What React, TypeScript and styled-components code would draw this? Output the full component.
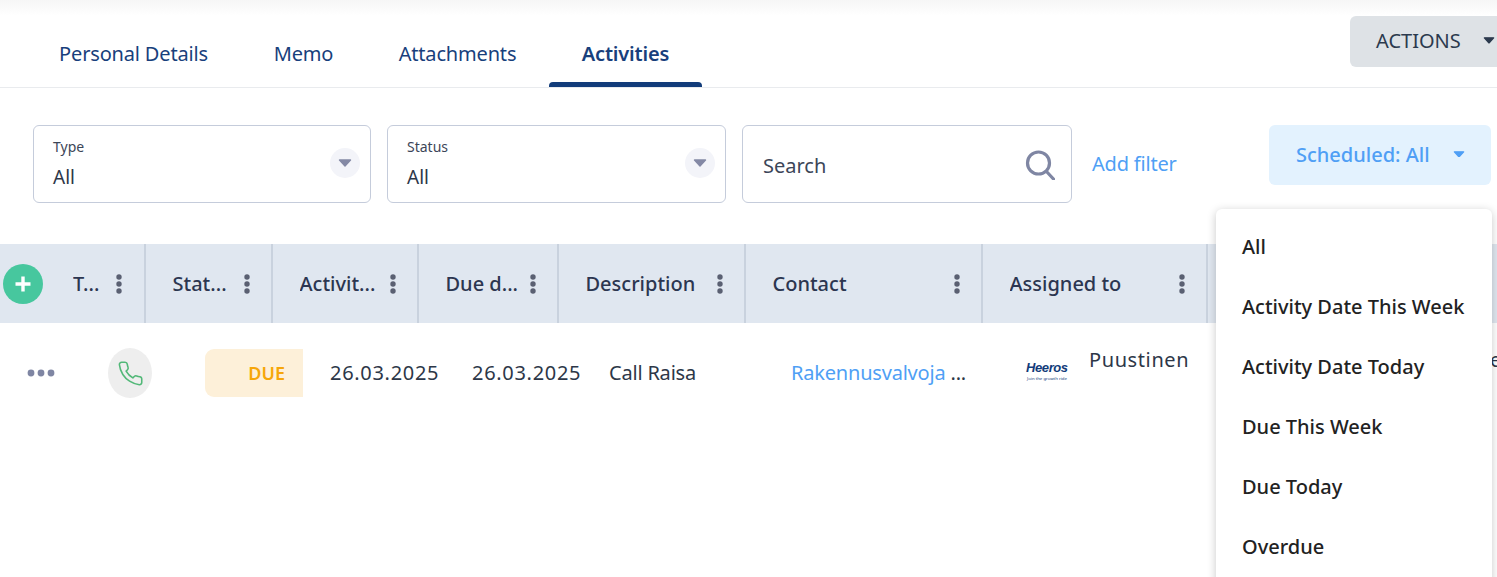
import React from "react";
import styled, { createGlobalStyle } from "styled-components";

const Global = createGlobalStyle`
  html, body { margin: 0; padding: 0; background: #fff; height: 100%; overflow: hidden; }
  body { font-family: "Noto Sans", "Open Sans", sans-serif; color: #2d3748; }
  * { box-sizing: border-box; }
`;

const Page = styled.div`
  position: relative;
  width: 1497px;
  height: 577px;
  overflow: hidden;
  background: #fff;
`;
const TopShade = styled.div`
  height: 16px;
  background: linear-gradient(#f6f6f6, #ffffff);
`;
const Header = styled.header`
  height: 72px;
  display: flex;
  justify-content: space-between;
  border-bottom: 1px solid #e9ebee;
  padding-left: 26px;
`;
const Tabs = styled.nav`
  display: flex;
  height: 71px;
`;
const Tab = styled.div<{ $active?: boolean; $w: number }>`
  position: relative;
  width: ${(p) => p.$w}px;
  display: flex;
  justify-content: center;
  padding-top: 24px;
  font-size: 20px;
  line-height: 27px;
  letter-spacing: -0.17px;
  color: #183f7c;
  font-weight: ${(p) => (p.$active ? 600 : 400)};
  ${(p) =>
    p.$active &&
    `&::after {
      content: "";
      position: absolute;
      left: 0;
      right: 0;
      bottom: 0;
      height: 5px;
      background: #123c7a;
      border-radius: 4px 4px 0 0;
    }`}
`;
const ActionsButton = styled.div`
  width: 147px;
  height: 51px;
  background: #dee2e6;
  border-radius: 6px 0 0 6px;
  display: flex;
  align-items: center;
  padding: 0 0 2px 26px;
  gap: 22px;
  font-size: 20px;
  color: #2c3a4e;
`;
const CaretIcon = ({ color, size = 12 }: { color: string; size?: number }) => (
  <svg width={size} height={(size * 8) / 14} viewBox="0 0 14 8">
    <path d="M1.5 1 H12.5 L7 7 Z" fill={color} stroke={color} strokeWidth="1.4" strokeLinejoin="round" />
  </svg>
);
const FilterRow = styled.section`
  display: flex;
  align-items: flex-start;
  padding: 37px 0 0 33px;
  height: 156px;
`;
const SelectBox = styled.div<{ $w: number }>`
  width: ${(p) => p.$w}px;
  height: 78px;
  margin-right: 16px;
  border: 1px solid #c5ccdb;
  border-radius: 6px;
  padding: 11px 19px;
  display: flex;
  align-items: flex-start;
  justify-content: space-between;
`;
const SelectText = styled.div`
  display: flex;
  flex-direction: column;
`;
const SelectLabel = styled.span`
  font-size: 14px;
  line-height: 19px;
  color: #3c4658;
`;
const SelectValue = styled.span`
  font-size: 19px;
  line-height: 26px;
  margin-top: 8px;
  color: #2d3748;
`;
const CaretCircle = styled.span`
  width: 30px;
  height: 30px;
  border-radius: 50%;
  background: #f3f4f9;
  display: flex;
  align-items: center;
  justify-content: center;
  margin: 11px -9px 0 0;
`;
const SearchBox = styled.div`
  width: 330px;
  height: 78px;
  border: 1px solid #c5ccdb;
  border-radius: 6px;
  padding: 1px 16px 0 20px;
  display: flex;
  align-items: center;
  justify-content: space-between;
  font-size: 20px;
  color: #3c4658;
`;
const SearchLabel = styled.span`
  margin-top: 2px;
`;
const AddFilter = styled.span`
  margin: 25px 0 0 20px;
  width: 177px;
  font-size: 20px;
  line-height: 27px;
  letter-spacing: -0.2px;
  color: #4f9ff5;
`;
const ScheduledButton = styled.div`
  width: 222px;
  height: 60px;
  background: #e3f2fe;
  border-radius: 6px;
  display: flex;
  align-items: center;
  padding: 0 0 2px 27px;
  gap: 23px;
  font-size: 20px;
  font-weight: 500;
  color: #4f9ff5;
`;
const TableHead = styled.div`
  height: 79px;
  background: #e0e7f0;
  display: flex;
`;
const HeadCell = styled.div<{ $w: number; $pl?: number; $pr?: number }>`
  width: ${(p) => p.$w}px;
  flex: none;
  display: flex;
  align-items: center;
  justify-content: space-between;
  padding: 0 ${(p) => p.$pr ?? 19.5}px 0 ${(p) => p.$pl ?? 26.5}px;
  border-right: 2px solid #c9d2de;
  font-size: 20px;
  font-weight: 500;
  color: #2c3650;
  white-space: nowrap;
`;
const HeadLabel = styled.span`
  overflow: hidden;
  text-overflow: ellipsis;
  min-width: 0;
`;
const AddButton = styled.span`
  width: 40px;
  height: 40px;
  border-radius: 50%;
  background: #47c79e;
  display: flex;
  align-items: center;
  justify-content: center;
  flex: none;
  margin-right: 30px;
`;
const TypeHead = styled.div`
  display: flex;
  align-items: center;
  justify-content: space-between;
  min-width: 0;
  flex: 1;
`;
const KebabWrap = styled.span`
  display: flex;
  flex: none;
  width: 10px;
  margin-left: 8px;
`;
const Row = styled.div`
  height: 100px;
  display: flex;
  align-items: flex-start;
  font-size: 20px;
  color: #2d3748;
`;
const Cell = styled.div<{ $w: number; $top?: number; $spacing?: number }>`
  width: ${(p) => p.$w}px;
  flex: none;
  padding-top: ${(p) => p.$top ?? 36}px;
  line-height: 27px;
  white-space: nowrap;
  letter-spacing: ${(p) => p.$spacing ?? -0.2}px;
`;
const IconCell = styled.div<{ $w: number; $pl: number; $top: number }>`
  width: ${(p) => p.$w}px;
  flex: none;
  display: flex;
  align-items: flex-start;
  padding: ${(p) => p.$top}px 0 0 ${(p) => p.$pl}px;
`;
const PhoneCircle = styled.span`
  width: 44px;
  height: 50px;
  border-radius: 50%;
  background: #eeeeee;
  display: flex;
  align-items: center;
  justify-content: center;
`;
const DueBadge = styled.span`
  width: 98px;
  height: 48px;
  background: #fdf0d9;
  border-radius: 9px 0 0 9px;
  display: flex;
  align-items: center;
  justify-content: flex-end;
  padding-right: 18px;
  font-size: 18px;
  font-weight: 600;
  color: #f6a609;
`;
const ContactLink = styled.span`
  color: #4f9ff5;
`;
const LogoWrap = styled.div`
  width: 64px;
  flex: none;
  padding: 38px 0 0 1px;
  display: flex;
  flex-direction: column;
  align-items: flex-start;
  color: #123c7a;
  line-height: 1;
`;
const LogoName = styled.span`
  font-size: 13px;
  font-weight: 800;
  font-style: italic;
  letter-spacing: -0.4px;
  font-family: "Liberation Sans", sans-serif;
`;
const LogoTag = styled.span`
  font-size: 4.3px;
  margin: 2px 0 0 1px;
  white-space: nowrap;
`;
const Menu = styled.ul`
  position: absolute;
  left: 1216px;
  top: 209px;
  width: 276px;
  height: 420px;
  margin: 0;
  padding: 7px 0 0 26px;
  list-style: none;
  background: #fff;
  border-radius: 6px;
  box-shadow: 0 2px 10px rgba(0, 0, 0, 0.22);
`;
const MenuItem = styled.li`
  height: 60px;
  display: flex;
  align-items: center;
  font-size: 20px;
  font-weight: 500;
  color: #222;
  white-space: nowrap;
`;

const Kebab = () => (
  <KebabWrap>
    <svg width="10" height="22" viewBox="0 0 10 22">
      <circle cx="5" cy="4" r="2.7" fill="#5a6072" />
      <circle cx="5" cy="11" r="2.7" fill="#5a6072" />
      <circle cx="5" cy="18" r="2.7" fill="#5a6072" />
    </svg>
  </KebabWrap>
);

const columns = [
  { label: "Stat...", w: 127 },
  { label: "Activit...", w: 146 },
  { label: "Due d...", w: 140 },
  { label: "Description", w: 187 },
  { label: "Contact", w: 237 },
  { label: "Assigned to", w: 225 },
];

const items = ["All", "Activity Date This Week", "Activity Date Today", "Due This Week", "Due Today", "Overdue"];

export default function App() {
  return (
    <Page>
      <Global />
      <TopShade />
      <Header>
        <Tabs>
          <Tab $w={215}>Personal Details</Tab>
          <Tab $w={125}>Memo</Tab>
          <Tab $w={183}>Attachments</Tab>
          <Tab $w={153} $active>Activities</Tab>
        </Tabs>
        <ActionsButton>
          ACTIONS
          <CaretIcon color="#2c3a4e" />
        </ActionsButton>
      </Header>
      <FilterRow>
        <SelectBox $w={338}>
          <SelectText>
            <SelectLabel>Type</SelectLabel>
            <SelectValue>All</SelectValue>
          </SelectText>
          <CaretCircle><CaretIcon color="#8489a5" size={14} /></CaretCircle>
        </SelectBox>
        <SelectBox $w={339}>
          <SelectText>
            <SelectLabel>Status</SelectLabel>
            <SelectValue>All</SelectValue>
          </SelectText>
          <CaretCircle><CaretIcon color="#8489a5" size={14} /></CaretCircle>
        </SelectBox>
        <SearchBox>
          <SearchLabel>Search</SearchLabel>
          <svg width="30" height="30" viewBox="0 0 30 30" fill="none" stroke="#7f86a3" strokeWidth="3.2">
            <circle cx="13.5" cy="13" r="11" />
            <path d="M21.5 21.5 L28.5 29" strokeLinecap="round" />
          </svg>
        </SearchBox>
        <AddFilter>Add filter</AddFilter>
        <ScheduledButton>
          Scheduled: All
          <CaretIcon color="#4f9ff5" />
        </ScheduledButton>
      </FilterRow>
      <TableHead>
        <HeadCell $w={146} $pl={3} $pr={20}>
          <AddButton>
            <svg width="20" height="20" viewBox="0 0 20 20">
              <path d="M10 2.5 V17.5 M2.5 10 H17.5" stroke="#fff" strokeWidth="3.4" />
            </svg>
          </AddButton>
          <TypeHead>
            <HeadLabel>T...</HeadLabel>
            <Kebab />
          </TypeHead>
        </HeadCell>
        {columns.map((c) => (
          <HeadCell key={c.label} $w={c.w}>
            <HeadLabel>{c.label}</HeadLabel>
            <Kebab />
          </HeadCell>
        ))}
      </TableHead>
      <Row>
        <IconCell $w={108} $pl={27} $top={44}>
          <svg width="28" height="12" viewBox="0 0 28 12">
            <circle cx="4" cy="6" r="3.4" fill="#7f86a3" />
            <circle cx="14" cy="6" r="3.4" fill="#7f86a3" />
            <circle cx="24" cy="6" r="3.4" fill="#7f86a3" />
          </svg>
        </IconCell>
        <IconCell $w={97} $pl={0} $top={25}>
          <PhoneCircle>
            <svg width="27" height="27" viewBox="0 0 24 24" fill="none" stroke="#52b878" strokeWidth="1.4" strokeLinecap="round" strokeLinejoin="round">
              <path d="M22 16.92v3a2 2 0 0 1-2.18 2 19.79 19.79 0 0 1-8.63-3.07 19.5 19.5 0 0 1-6-6 19.79 19.79 0 0 1-3.07-8.67A2 2 0 0 1 4.11 2h3a2 2 0 0 1 2 1.72c.13.96.36 1.9.7 2.81a2 2 0 0 1-.45 2.11L8.09 9.91a16 16 0 0 0 6 6l1.27-1.27a2 2 0 0 1 2.11-.45c.91.34 1.85.57 2.81.7A2 2 0 0 1 22 16.92z" />
            </svg>
          </PhoneCircle>
        </IconCell>
        <IconCell $w={125} $pl={0} $top={26}>
          <DueBadge>DUE</DueBadge>
        </IconCell>
        <Cell $w={142} $spacing={0.7}>26.03.2025</Cell>
        <Cell $w={137} $spacing={0.7}>26.03.2025</Cell>
        <Cell $w={182}>Call Raisa</Cell>
        <Cell $w={234}><ContactLink>Rakennusvalvoja</ContactLink> ...</Cell>
        <LogoWrap>
          <LogoName>Heeros</LogoName>
          <LogoTag>Join the growth ride</LogoTag>
        </LogoWrap>
        <Cell $w={401} $top={23} $spacing={0.6}>Puustinen</Cell>
        <Cell $w={10} $top={23} $spacing={0}>e</Cell>
      </Row>
      <Menu>
        {items.map((i) => (
          <MenuItem key={i}>{i}</MenuItem>
        ))}
      </Menu>
    </Page>
  );
}
